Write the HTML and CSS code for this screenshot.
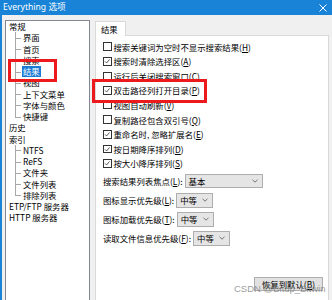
FILE: index.html
```html
<!DOCTYPE html>
<html lang="zh-CN">
<head>
<meta charset="utf-8">
<title>Everything 选项</title>
<link rel="stylesheet" href="styles.css">
</head>
<body>
<div class="window">
  <div class="titlebar">
    <span class="title">Everything 选项</span>
    <svg class="close" width="8" height="8" viewBox="0 0 8 8"><path d="M0.5 0.5L7.5 7.5M7.5 0.5L0.5 7.5" stroke="#fff" stroke-width="1" fill="none"/></svg>
  </div>
  <div class="main">
    <div class="tree">
      <div class="node">常规</div>
      <div class="group">
        <div class="leaf">界面</div>
        <div class="leaf">首页</div>
        <div class="leaf">搜索</div>
        <div class="leaf"><span class="sel">结果</span></div>
        <div class="leaf">视图</div>
        <div class="leaf">上下文菜单</div>
        <div class="leaf">字体与颜色</div>
        <div class="leaf">快捷键</div>
      </div>
      <div class="node">历史</div>
      <div class="node">索引</div>
      <div class="group">
        <div class="leaf">NTFS</div>
        <div class="leaf">ReFS</div>
        <div class="leaf">文件夹</div>
        <div class="leaf">文件列表</div>
        <div class="leaf">排除列表</div>
      </div>
      <div class="node">ETP/FTP 服务器</div>
      <div class="node">HTTP 服务器</div>
    </div>
    <div class="tabs">
      <div class="tab">结果</div>
      <div class="panel">
        <div class="check"><span class="box"></span><span>搜索关键词为空时不显示搜索结果(<u>H</u>)</span></div>
        <div class="check"><span class="box"><svg viewBox="0 0 8 8"><path d="M1.3 4.2L3.2 6.1L6.8 1.8" stroke="#333" stroke-width="1" fill="none"/></svg></span><span>搜索时清除选择区(<u>A</u>)</span></div>
        <div class="check"><span class="box"></span><span>运行后关闭搜索窗口(<u>C</u>)</span></div>
        <div class="check"><span class="box"><svg viewBox="0 0 8 8"><path d="M1.3 4.2L3.2 6.1L6.8 1.8" stroke="#333" stroke-width="1" fill="none"/></svg></span><span>双击路径列打开目录(<u>P</u>)</span></div>
        <div class="check"><span class="box"></span><span>视图自动刷新(<u>V</u>)</span></div>
        <div class="check"><span class="box"></span><span>复制路径包含双引号(<u>Q</u>)</span></div>
        <div class="check"><span class="box"><svg viewBox="0 0 8 8"><path d="M1.3 4.2L3.2 6.1L6.8 1.8" stroke="#333" stroke-width="1" fill="none"/></svg></span><span>重命名时, 忽略扩展名(<u>E</u>)</span></div>
        <div class="check"><span class="box"><svg viewBox="0 0 8 8"><path d="M1.3 4.2L3.2 6.1L6.8 1.8" stroke="#333" stroke-width="1" fill="none"/></svg></span><span>按日期降序排列(<u>D</u>)</span></div>
        <div class="check"><span class="box"><svg viewBox="0 0 8 8"><path d="M1.3 4.2L3.2 6.1L6.8 1.8" stroke="#333" stroke-width="1" fill="none"/></svg></span><span>按大小降序排列(<u>S</u>)</span></div>

        <div class="field first"><span>搜索结果列表焦点(<u>L</u>):</span><div class="combo wide"><span>基本</span><svg class="chev" width="6" height="4" viewBox="0 0 6 4"><path d="M0.5 0.8L3 3.2L5.5 0.8" stroke="#666" stroke-width="0.9" fill="none"/></svg></div></div>
        <div class="field"><span>图标显示优先级(<u>L</u>):</span><div class="combo"><span>中等</span><svg class="chev" width="6" height="4" viewBox="0 0 6 4"><path d="M0.5 0.8L3 3.2L5.5 0.8" stroke="#666" stroke-width="0.9" fill="none"/></svg></div></div>
        <div class="field"><span>图标加载优先级(<u>T</u>):</span><div class="combo"><span>中等</span><svg class="chev" width="6" height="4" viewBox="0 0 6 4"><path d="M0.5 0.8L3 3.2L5.5 0.8" stroke="#666" stroke-width="0.9" fill="none"/></svg></div></div>
        <div class="field"><span>读取文件信息优先级(<u>F</u>):</span><div class="combo"><span>中等</span><svg class="chev" width="6" height="4" viewBox="0 0 6 4"><path d="M0.5 0.8L3 3.2L5.5 0.8" stroke="#666" stroke-width="0.9" fill="none"/></svg></div></div>

        <div class="actions"><button class="btn">恢复到默认(<u>B</u>)</button></div>
      </div>
    </div>
  </div>
  <div class="mark mark-tree"></div>
  <div class="mark mark-opt"></div>
  <div class="watermark">CSDN @Bitup_Bitwin</div>
</div>
</body>
</html>
```

FILE: styles.css
```css
* { box-sizing: border-box; }
html, body { margin: 0; padding: 0; }
body {
  width: 332px;
  height: 300px;
  overflow: hidden;
  background: #f0f0f0;
  font-family: "Noto Sans CJK SC", "Noto Sans", sans-serif;
  font-size: 8.4px;
  color: #000;
}
u { text-decoration: underline; text-underline-offset: 1px; }

.window {
  position: relative;
  width: 332px;
  height: 300px;
  display: flex;
  flex-direction: column;
}

.titlebar {
  height: 15px;
  flex: none;
  background: #1883d7;
  color: #fff;
  display: flex;
  align-items: center;
  justify-content: space-between;
  padding: 0 5px 0 3px;
}
.title {
  font-family: "Noto Sans", "Noto Sans CJK SC", sans-serif;
  font-size: 8.6px;
  line-height: 15px;
}
.close { display: block; }

.main {
  flex: 1;
  min-height: 0;
  display: flex;
  border-left: 2px solid #1883d7;
  padding: 5px 3px 0 3px;
  overflow: hidden;
}

.tree {
  width: 85px;
  flex: none;
  margin-bottom: -4px;
  background: #fff;
  border: 1px solid #828790;
  line-height: 11.25px;
  white-space: nowrap;
}
.node {
  height: 11.25px;
  padding-left: 3px;
}
.leaf {
  position: relative;
  height: 11.25px;
  padding-left: 17px;
}
.leaf::before {
  content: "";
  position: absolute;
  left: 9px;
  top: 0;
  bottom: 0;
  border-left: 1px solid #a8a8a8;
}
.leaf:last-child::before { bottom: 50%; }
.leaf::after {
  content: "";
  position: absolute;
  left: 9px;
  top: 50%;
  width: 6px;
  border-top: 1px solid #a8a8a8;
}
.sel {
  display: inline-block;
  background: #1a7ad4;
  color: #fff;
  padding: 0 1px;
  margin-left: -1px;
}

.tabs {
  flex: 1;
  min-width: 0;
  display: flex;
  flex-direction: column;
  margin-left: 5px;
}
.tab {
  align-self: flex-start;
  position: relative;
  z-index: 1;
  width: 31px;
  height: 15px;
  margin-top: 1px;
  margin-bottom: -1px;
  padding-left: 5px;
  background: #fff;
  border: 1px solid #d9d9d9;
  border-bottom: none;
  line-height: 14px;
}
.panel {
  flex: 1;
  display: flex;
  flex-direction: column;
  background: #fff;
  border: 1px solid #d9d9d9;
  border-bottom: none;
  padding: 3.4px 5px 9px 7px;
}

.check {
  height: 14.6px;
  display: flex;
  align-items: center;
  gap: 2px;
  white-space: nowrap;
}
.box {
  flex: none;
  width: 8.5px;
  height: 8.5px;
  border: 1px solid #333;
  background: #fff;
  display: flex;
}
.box svg { width: 100%; height: 100%; display: block; }

.field {
  height: 14.5px;
  margin-top: 4.6px;
  display: flex;
  align-items: center;
  gap: 2px;
  white-space: nowrap;
}
.field.first { margin-top: 3.2px; }
.combo {
  width: 37px;
  height: 14.5px;
  display: flex;
  align-items: center;
  justify-content: space-between;
  padding: 0 4px 0 3px;
  background: #e5e5e5;
  border: 1px solid #adadad;
}
.combo.wide { width: 78px; }
.chev { display: block; }

.actions {
  margin-top: auto;
  display: flex;
  justify-content: flex-end;
}
.btn {
  width: 69px;
  height: 14px;
  padding: 0;
  font: inherit;
  font-size: 8.4px;
  line-height: 12px;
  color: #000;
  background: #e1e1e1;
  border: 1px solid #adadad;
}

.mark {
  position: absolute;
  border: 3px solid #ec1a1d;
}
.mark-tree { left: 8px; top: 59px; width: 49px; height: 23px; }
.mark-opt { left: 92px; top: 79px; width: 115px; height: 24px; }

.watermark {
  position: absolute;
  left: 234px;
  top: 283px;
  font-family: "Liberation Sans", Arial, sans-serif;
  font-size: 9.5px;
  line-height: 12px;
  color: rgba(130, 130, 130, 0.8);
  white-space: nowrap;
}
```
